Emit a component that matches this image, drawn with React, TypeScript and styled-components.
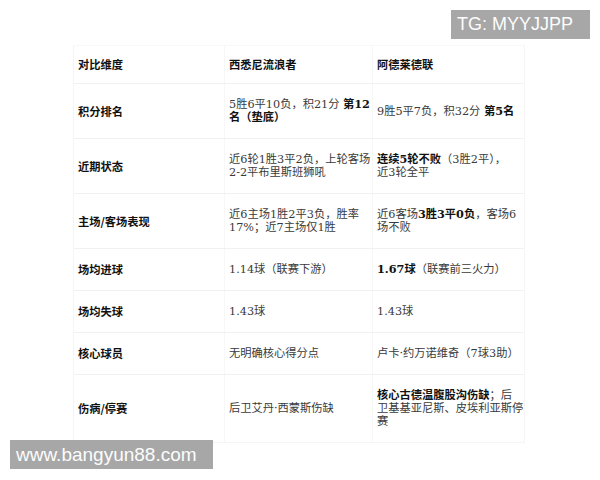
import styled, { createGlobalStyle } from 'styled-components'
import { FC, ReactNode } from 'react'

const GlobalStyle = createGlobalStyle`
  html, body {
    margin: 0;
    padding: 0;
    background: #fff;
  }
`

type Row = { label: string; west: ReactNode; adelaide: ReactNode }

const rows: Row[] = [
  {
    label: '积分排名',
    west: (
      <>
        5胜6平10负，积21分 <b>第12名（垫底）</b>
      </>
    ),
    adelaide: (
      <>
        9胜5平7负，积32分 <b>第5名</b>
      </>
    ),
  },
  {
    label: '近期状态',
    west: '近6轮1胜3平2负，上轮客场2-2平布里斯班狮吼',
    adelaide: (
      <>
        <b>连续5轮不败</b>（3胜2平），
        <br />
        近3轮全平
      </>
    ),
  },
  {
    label: '主场/客场表现',
    west: '近6主场1胜2平3负，胜率17%；近7主场仅1胜',
    adelaide: (
      <>
        近6客场<b>3胜3平0负</b>，客场6场不败
      </>
    ),
  },
  {
    label: '场均进球',
    west: '1.14球（联赛下游）',
    adelaide: (
      <>
        <b>1.67球</b>（联赛前三火力）
      </>
    ),
  },
  { label: '场均失球', west: '1.43球', adelaide: '1.43球' },
  { label: '核心球员', west: '无明确核心得分点', adelaide: '卢卡·约万诺维奇（7球3助）' },
  {
    label: '伤病/停赛',
    west: '后卫艾丹·西蒙斯伤缺',
    adelaide: (
      <>
        <b>核心古德温腹股沟伤缺</b>；后
        <br />
        卫基基亚尼斯、皮埃利亚斯停
        <br />
        赛
      </>
    ),
  },
]

const Page = styled.div`
  position: relative;
  width: 600px;
  height: 480px;
  box-sizing: border-box;
  padding: 45px 0 0 73px;
  overflow: hidden;
`

const Table = styled.div`
  width: 452px;
  border: 1px solid #f5f5f5;
  border-top-color: #f8f8f8;
  box-sizing: border-box;
`

const RowC = styled.div`
  display: grid;
  grid-template-columns: 150px 148px 1fr;
  border-bottom: 1px solid #f1f1f1;

  &:last-child {
    border-bottom: none;
  }
`

const Cell = styled.div<{ $head?: boolean; $label?: boolean }>`
  display: flex;
  align-items: center;
  padding: ${(p) => (p.$head ? '12px' : '14px')} 0 ${(p) => (p.$head ? '12px' : '14px')} 4px;
  font-family: ${(p) =>
    p.$head || p.$label
      ? '"Noto Sans CJK SC", "Liberation Sans", sans-serif'
      : '"DejaVu Serif", "Noto Sans CJK SC", serif'};
  font-size: 11.25px;
  line-height: 13px;
  font-weight: ${(p) => (p.$head || p.$label ? 700 : 400)};
  color: ${(p) => (p.$head || p.$label ? '#111' : '#3a3a3a')};

  & + & {
    border-left: 1px solid #f7f7f7;
  }

  b {
    font-weight: 700;
    color: #111;
  }
`

const Text = styled.span`
  display: block;
`

const Watermark = styled.div<{ $side: 'top' | 'bottom' }>`
  position: absolute;
  ${(p) =>
    p.$side === 'top'
      ? 'left: 451px; top: 10px; width: 139px; font-size: 18px;'
      : 'left: 10px; top: 440px; width: 203px; font-size: 19px;'}
  height: 29px;
  box-sizing: border-box;
  padding-left: 6px;
  background: #a7a7a7;
  color: #fcfcfc;
  font-family: 'Liberation Sans', Arial, sans-serif;
  line-height: 29px;
  white-space: nowrap;
`

const App: FC = () => (
  <Page>
    <GlobalStyle />
    <Table>
      <RowC>
        <Cell $head>对比维度</Cell>
        <Cell $head>西悉尼流浪者</Cell>
        <Cell $head>阿德莱德联</Cell>
      </RowC>
      {rows.map((r) => (
        <RowC key={r.label}>
          <Cell $label>{r.label}</Cell>
          <Cell>
            <Text>{r.west}</Text>
          </Cell>
          <Cell>
            <Text>{r.adelaide}</Text>
          </Cell>
        </RowC>
      ))}
    </Table>
    <Watermark $side="top">TG: MYYJJPP</Watermark>
    <Watermark $side="bottom">www.bangyun88.com</Watermark>
  </Page>
)

export default App
